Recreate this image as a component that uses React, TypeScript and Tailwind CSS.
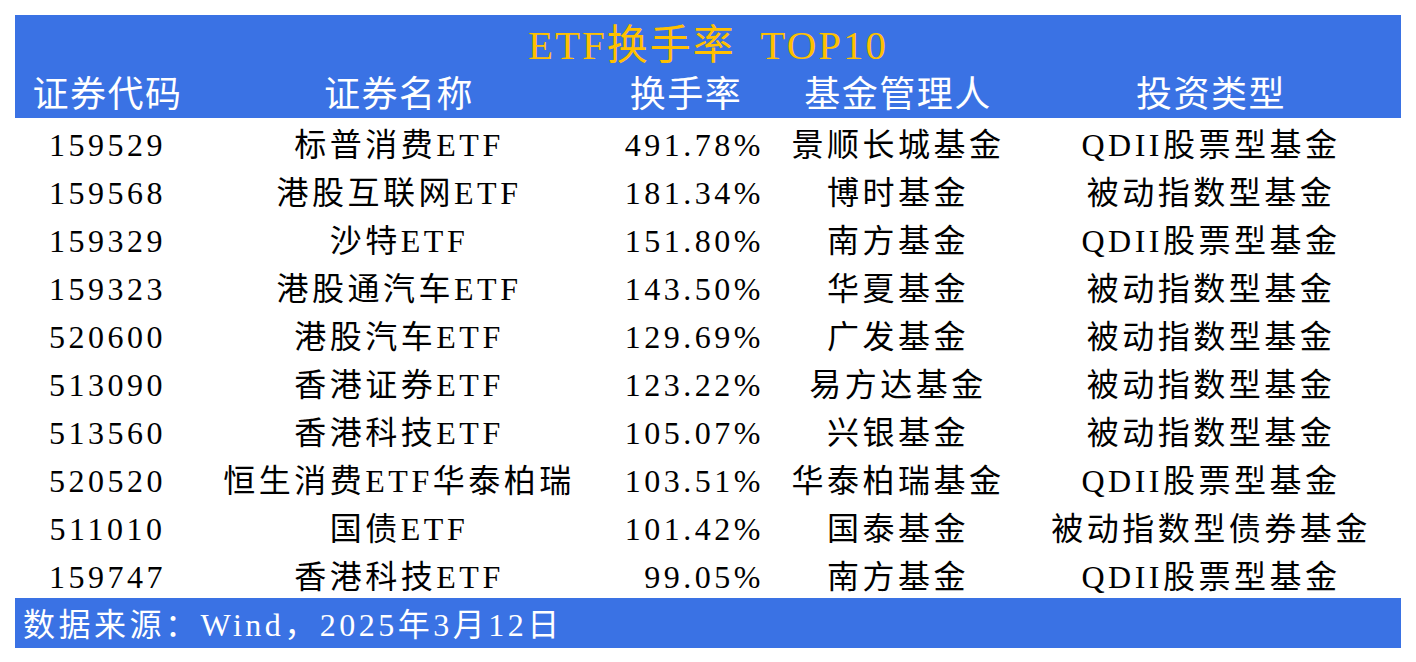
import React from 'react';

interface Row {
    code: string;
    name: string;
    rate: string;
    manager: string;
    kind: string;
}

const rows: Row[] = [
    { code: '159529', name: '标普消费ETF', rate: '491.78%', manager: '景顺长城基金', kind: 'QDII股票型基金' },
    { code: '159568', name: '港股互联网ETF', rate: '181.34%', manager: '博时基金', kind: '被动指数型基金' },
    { code: '159329', name: '沙特ETF', rate: '151.80%', manager: '南方基金', kind: 'QDII股票型基金' },
    { code: '159323', name: '港股通汽车ETF', rate: '143.50%', manager: '华夏基金', kind: '被动指数型基金' },
    { code: '520600', name: '港股汽车ETF', rate: '129.69%', manager: '广发基金', kind: '被动指数型基金' },
    { code: '513090', name: '香港证券ETF', rate: '123.22%', manager: '易方达基金', kind: '被动指数型基金' },
    { code: '513560', name: '香港科技ETF', rate: '105.07%', manager: '兴银基金', kind: '被动指数型基金' },
    { code: '520520', name: '恒生消费ETF华泰柏瑞', rate: '103.51%', manager: '华泰柏瑞基金', kind: 'QDII股票型基金' },
    { code: '511010', name: '国债ETF', rate: '101.42%', manager: '国泰基金', kind: '被动指数型债券基金' },
    { code: '159747', name: '香港科技ETF', rate: '99.05%', manager: '南方基金', kind: 'QDII股票型基金' },
];

const cols = 'grid grid-cols-[185px_398px_176px_248px_378px]';

const App: React.FC = () => {
    return (
        <div className="w-[1416px] h-[662px] bg-white p-[15px] font-['Liberation_Serif','Noto_Sans_CJK_SC',serif]">
            <div className="bg-[#3a72e4] h-[103px] flex flex-col">
                <div className="h-[60px] flex items-center justify-center text-[41px] tracking-[2px] text-[#ffc000] leading-none whitespace-pre">
                    ETF换手率  TOP10
                </div>
                <div className={`${cols} flex-1 items-center text-white text-[36px] tracking-[1.5px] leading-none pb-[4px]`}>
                    <div className="text-center">证券代码</div>
                    <div className="text-center">证券名称</div>
                    <div className="text-center">换手率</div>
                    <div className="text-center">基金管理人</div>
                    <div className="text-center">投资类型</div>
                </div>
            </div>

            <div className="text-black text-[32px] tracking-[3.5px]">
                {rows.map((r) => (
                    <div key={r.code + r.name} className={`${cols} h-12 pt-[3px] items-center leading-[48px] whitespace-nowrap`}>
                        <div className="text-center">{r.code}</div>
                        <div className="text-center">{r.name}</div>
                        <div className="text-right pr-[10px]">{r.rate}</div>
                        <div className="text-center">{r.manager}</div>
                        <div className="text-center">{r.kind}</div>
                    </div>
                ))}
            </div>

            <div className="bg-[#3a72e4] h-[50px] flex items-center pl-[8px] pt-[4px] text-white text-[32px] tracking-[3.5px] leading-none whitespace-nowrap">
                数据来源：Wind，2025年3月12日
            </div>
        </div>
    );
};

export default App;
